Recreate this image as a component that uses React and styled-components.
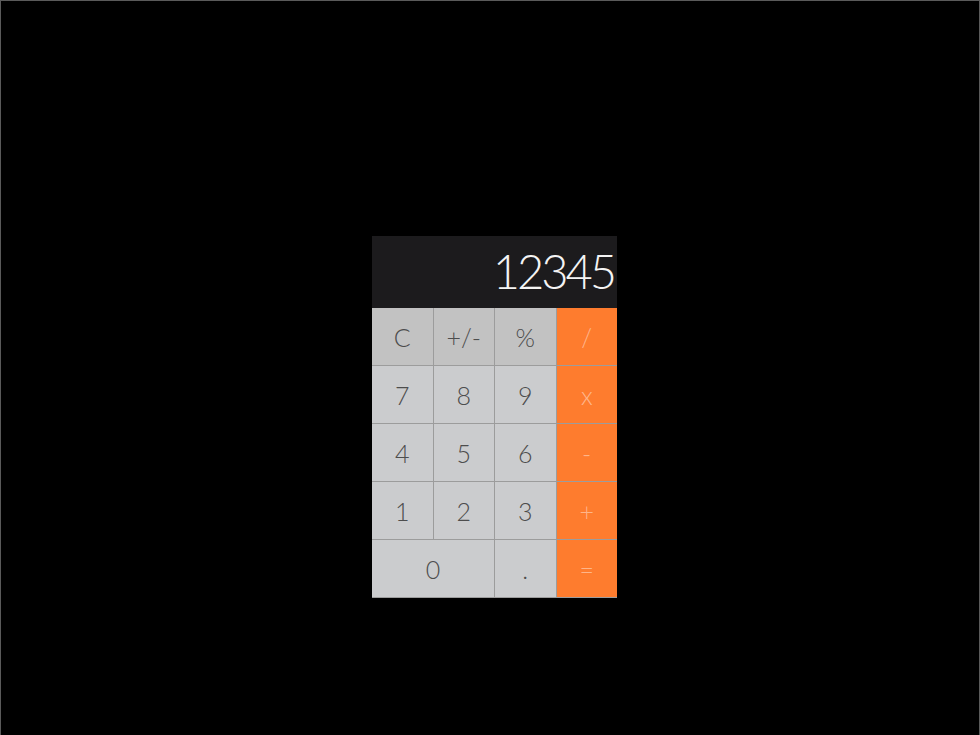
import React from "react";
import styled, { createGlobalStyle } from "styled-components";

const Global = createGlobalStyle`
  html, body { margin: 0; padding: 0; background: #000; }
  body { font-family: Lato, "Open Sans", sans-serif; }
`;

const Frame = styled.div`
  height: 100vh;
  border: 1px solid #5a5a5a;
  border-bottom: none;
  background: #000;
  padding: 235px 0 0 371px;
  box-sizing: border-box;
`;

const Calculator = styled.div`
  width: 245px;
  display: flex;
  flex-direction: column;
`;

const Display = styled.div`
  height: 72px;
  background: #1c1b1d;
  color: #f4f4f4;
  font-family: Lato, sans-serif;
  font-weight: 300;
  font-size: 47px;
  letter-spacing: -3px;
  display: flex;
  align-items: center;
  justify-content: flex-end;
  padding-right: 3px;
  padding-bottom: 2px;
  box-sizing: border-box;
`;

const Keypad = styled.div`
  display: grid;
  grid-template-columns: repeat(4, 1fr);
  grid-auto-rows: 57px;
  gap: 1px;
  background: #9c9c9c;
  padding-bottom: 1px;
`;

const Key = styled.button`
  border: 0;
  margin: 0;
  padding: 0;
  font-family: Lato, sans-serif;
  font-weight: 300;
  font-size: 25px;
  grid-column: span ${(p) => p.$span || 1};
  background: ${(p) =>
    p.$kind === "op" ? "#fe7c2e" : p.$kind === "fn" ? "#c2c2c2" : "#cbccce"};
  color: ${(p) => (p.$kind === "op" ? "rgba(255,255,255,0.45)" : "#4d4d4d")};
  display: flex;
  align-items: center;
  justify-content: center;
`;

const keys = [
  ["C", "fn"], ["+/-", "fn"], ["%", "fn"], ["/", "op"],
  ["7"], ["8"], ["9"], ["x", "op"],
  ["4"], ["5"], ["6"], ["-", "op"],
  ["1"], ["2"], ["3"], ["+", "op"],
  ["0", "num", 2], ["."], ["=", "op"],
];

export default function App() {
  return (
    <>
      <Global />
      <Frame>
        <Calculator>
          <Display>12345</Display>
          <Keypad>
            {keys.map(([label, kind = "num", span]) => (
              <Key key={label} $kind={kind} $span={span}>
                {label}
              </Key>
            ))}
          </Keypad>
        </Calculator>
      </Frame>
    </>
  );
}
